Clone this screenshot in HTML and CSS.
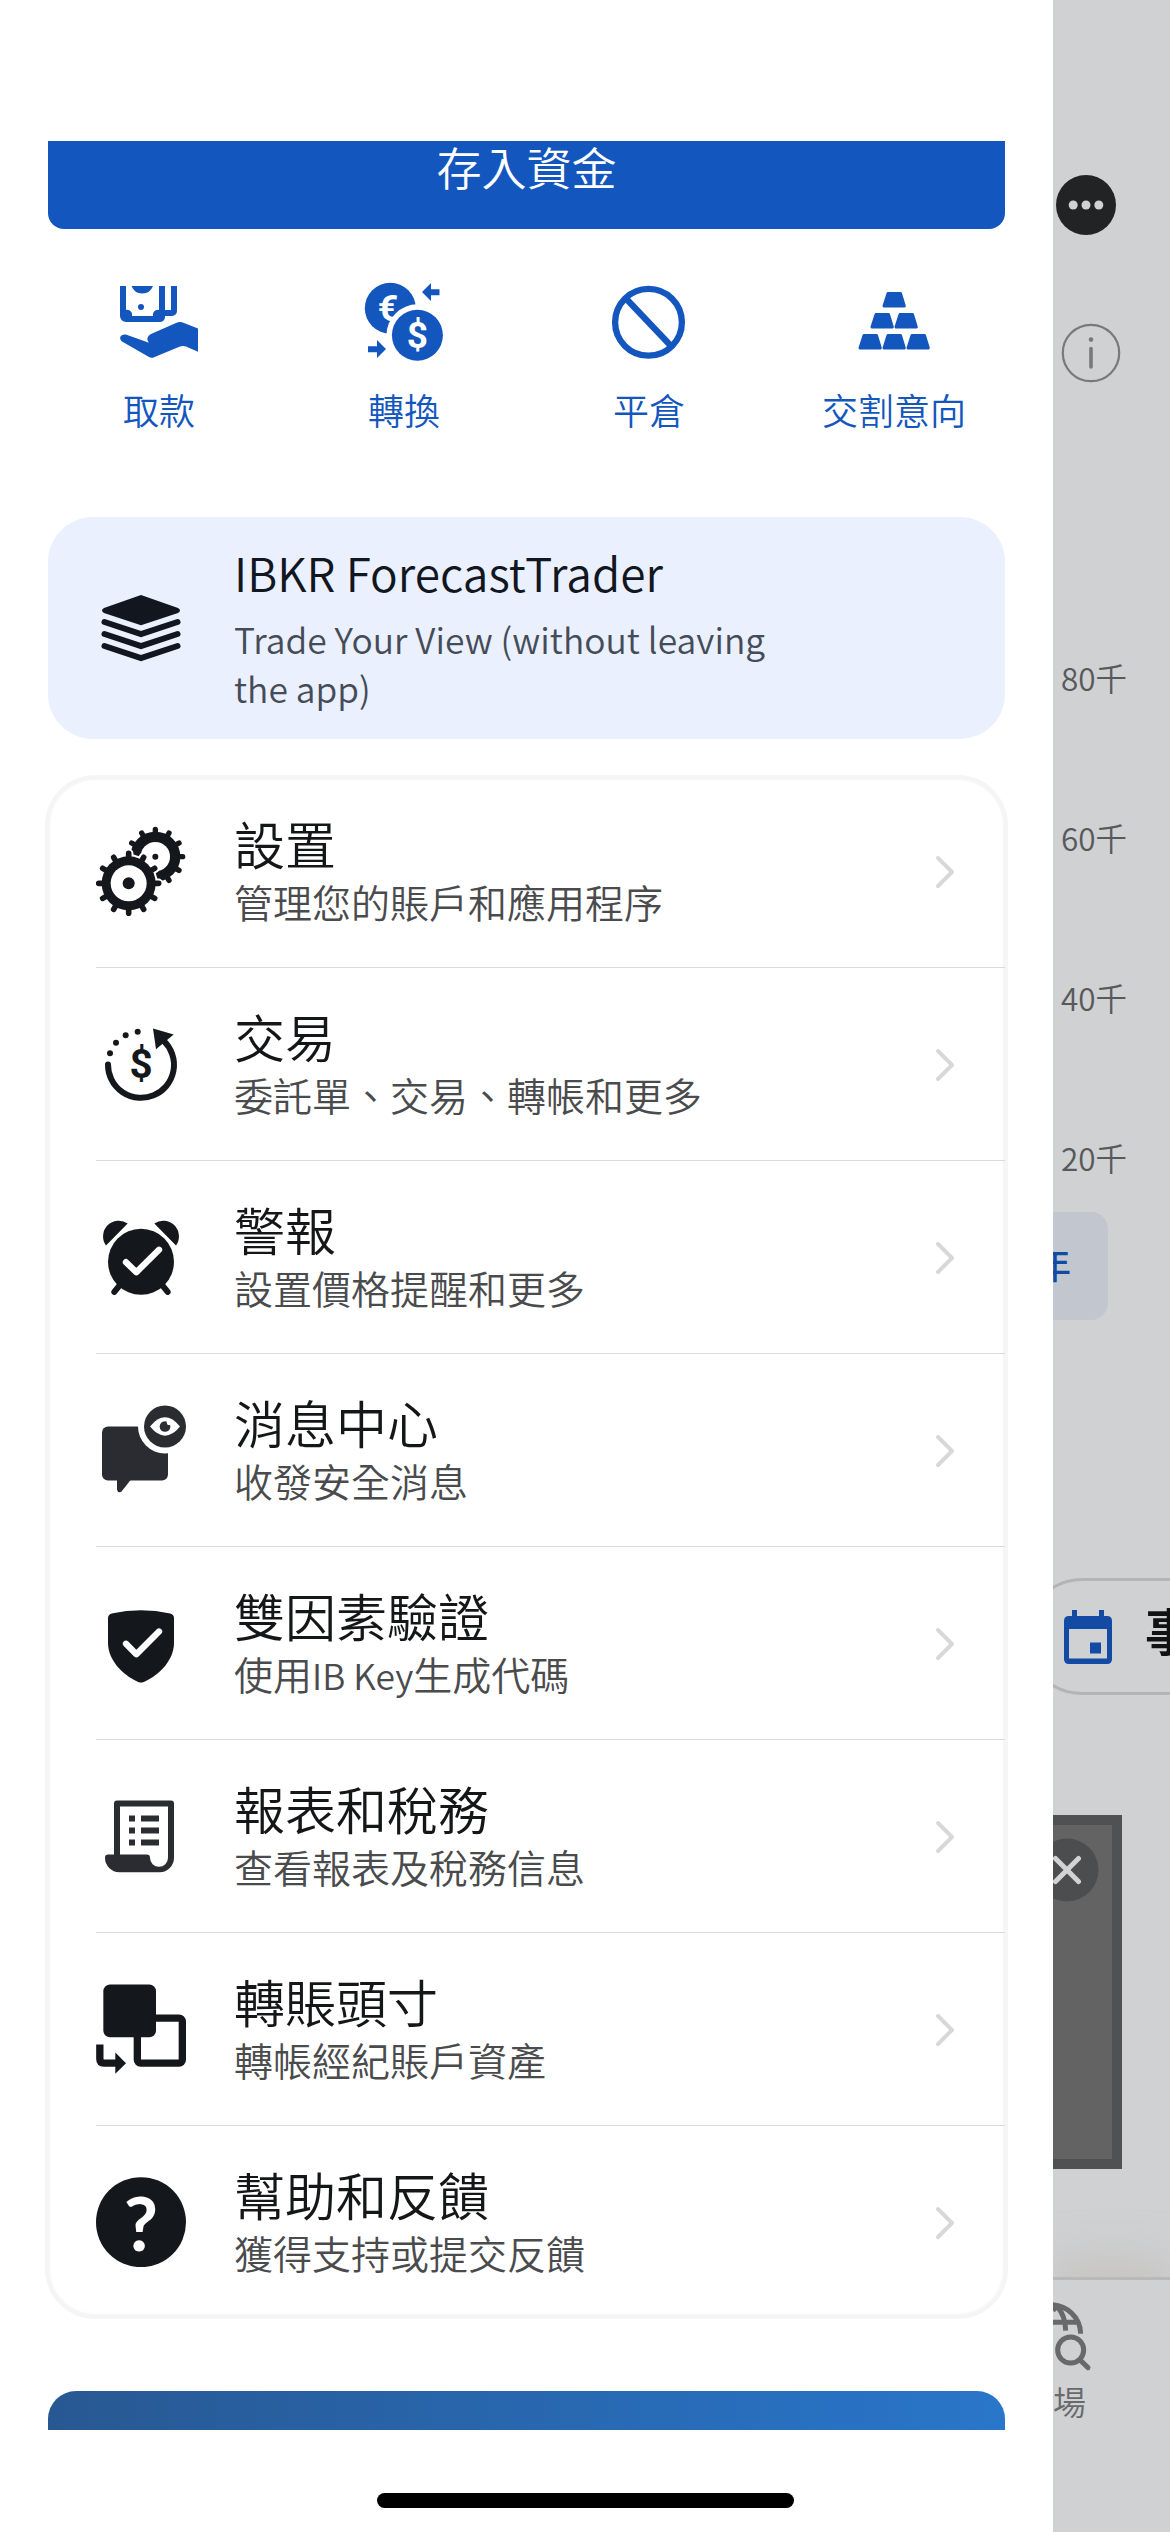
FILE: index.html
```html
<!DOCTYPE html>
<html lang="zh-Hant">
<head>
<meta charset="utf-8">
<title>選單</title>
<link rel="stylesheet" href="styles.css">
</head>
<body>
<div class="app">
  <aside class="drawer">
    <div class="scroller">
      <button class="deposit">存入資金</button>

      <nav class="actions">
        <a class="action">
          <svg class="icon" viewBox="114 277 90 90" fill="currentColor">
            <path d="M120 286h6v24a5 5 0 0 1 6 6h21a5 5 0 0 1 6-6v-24h6v24h6v-24h6v25a5 5 0 0 1-5 5h-7a5 5 0 0 1-5 6h-34a6 6 0 0 1-6-6z"/>
            <path d="M131.500 286a11.500 11.500 0 0 0 21.500 0z"/>
            <circle cx="141" cy="307" r="3"/>
            <path d="M126.500 334.800L149 342.800C146 339 147.500 336 151 334L176 323Q180 321 184 323L198 328.500V351.800L186 346.500Q183 345.500 180 346.500L154 357.200Q151.500 358.500 149 357L122 341.500C118 338 121 333.500 126.500 334.800z"/>
          </svg>
          <span>取款</span>
        </a>
        <a class="action">
          <svg class="icon" viewBox="359 277 90 90" fill="currentColor">
            <circle cx="390.300" cy="308.200" r="25.500"/>
            <text class="coin" x="388" y="321" font-size="36">€</text>
            <circle cx="417.400" cy="335.300" r="31" fill="#fff"/>
            <circle cx="417.400" cy="335.300" r="25.500"/>
            <text class="coin" x="417.400" y="348.300" font-size="37">$</text>
            <path d="M422 292l9-9v6.300h8.500v6H431v5.700zM386 349l-9-9v6.300h-9v6h9v5.700z"/>
          </svg>
          <span>轉換</span>
        </a>
        <a class="action">
          <svg class="icon" viewBox="604 277 90 90" fill="none" stroke="currentColor" stroke-width="6.300">
            <circle cx="648.500" cy="322.300" r="33.400"/>
            <path d="M625.500 298l46 48.500"/>
          </svg>
          <span>平倉</span>
        </a>
        <a class="action">
          <svg class="icon" viewBox="849 277 90 90" fill="currentColor" stroke="currentColor" stroke-width="3" stroke-linejoin="round">
            <path d="M888 293.500h12.500l3.800 12.500h-20.300zM876 314.500h12.500l3.800 12.500h-20.300zM900 314.500h12.500l3.800 12.500h-20.300zM864 335.500h12.500l3.800 12.500h-20.300zM888 335.500h12.500l3.800 12.500h-20.300zM912 335.500h12.500l3.800 12.500h-20.300z"/>
          </svg>
          <span>交割意向</span>
        </a>
      </nav>

      <section class="promo">
        <svg class="icon" viewBox="96 583 90 90" fill="none" stroke="currentColor" stroke-width="6" stroke-linecap="round">
          <path d="M141 595L178 608Q182 610.500 178 613L141 625.200L104 613Q100 610.500 104 608z" fill="currentColor" stroke="none"/>
          <path d="M104.500 622L141 634L177.500 622M104.500 634L141 646L177.500 634M104.500 646L141 658L177.500 646"/>
        </svg>
        <div class="promo-text">
          <h2 class="promo-title">IBKR ForecastTrader</h2>
          <p class="promo-sub">Trade Your View (without leaving the app)</p>
        </div>
      </section>

      <ul class="menu">
        <li class="item">
          <svg class="icon" viewBox="198 200 270 270">
            <g transform="translate(376 292)">
              <circle r="75" fill="currentColor"/>
              <path d="M-82 0H82M0-82V82M-71-41L71 41M-71 41L71-41M-41-71L41 71M41-71L-41 71" stroke="currentColor" stroke-width="16" stroke-linecap="round"/>
              <circle r="44" fill="#fff"/>
              <circle r="9" fill="currentColor"/>
            </g>
            <g transform="translate(296 372)">
              <circle r="87" fill="#fff"/>
              <path d="M-89 0H89M0-89V89M-77.500-44.800L77.500 44.800M-77.500 44.800L77.500-44.800M-44.800-77.500L44.800 77.500M44.800-77.500L-44.800 77.500" stroke="#fff" stroke-width="29" stroke-linecap="round"/>
              <circle r="81" fill="currentColor"/>
              <path d="M-90 0H90M0-90V90M-78-45L78 45M-78 45L78-45M-45-78L45 78M45-78L-45 78" stroke="currentColor" stroke-width="17" stroke-linecap="round"/>
              <circle r="54" fill="#fff"/>
              <circle r="18" fill="currentColor"/>
            </g>
          </svg>
          <div class="item-text"><h3>設置</h3><p>管理您的賬戶和應用程序</p></div>
          <svg class="chevron" viewBox="0 0 20 34"><path d="M3 3L17 17L3 31"/></svg>
        </li>
        <li class="item">
          <svg class="icon" viewBox="198 778.500 270 270" fill="currentColor">
            <path d="M234 915A99 99 0 1 0 402 845" fill="none" stroke="currentColor" stroke-width="18" stroke-linecap="round"/>
            <path d="M369 807L431 825L378 869z"/>
            <circle cx="240" cy="881" r="9"/><circle cx="258" cy="850" r="9"/><circle cx="287" cy="827" r="9"/><circle cx="323" cy="817" r="9"/>
            <text class="dollar" x="333" y="955" font-size="121">$</text>
          </svg>
          <div class="item-text"><h3>交易</h3><p>委託單、交易、轉帳和更多</p></div>
          <svg class="chevron" viewBox="0 0 20 34"><path d="M3 3L17 17L3 31"/></svg>
        </li>
        <li class="item">
          <svg class="icon" viewBox="198 157.500 270 270" fill="currentColor">
            <circle cx="333" cy="307" r="99"/>
            <path d="M228 258A47 47 0 0 1 293 192zM438 258A47 47 0 0 0 373 192z"/>
            <path d="M270 376L253 397M396 376L413 397" stroke="currentColor" stroke-width="18" stroke-linecap="round"/>
            <path d="M288 308L319 338L387 271" fill="none" stroke="#fff" stroke-width="19" stroke-linecap="round" stroke-linejoin="round"/>
          </svg>
          <div class="item-text"><h3>警報</h3><p>設置價格提醒和更多</p></div>
          <svg class="chevron" viewBox="0 0 20 34"><path d="M3 3L17 17L3 31"/></svg>
        </li>
        <li class="item">
          <svg class="icon soft" viewBox="198 736.500 270 270" fill="currentColor">
            <rect x="216" y="801" width="198" height="162" rx="18"/>
            <path d="M261 960V990Q263 1002 274 997L303 960z"/>
            <circle cx="405" cy="801" r="81" fill="#fff"/>
            <circle cx="405" cy="801" r="63"/>
            <path d="M360 801Q405 746 450 801Q405 856 360 801z" fill="#fff"/>
            <circle cx="405" cy="801" r="16"/><circle cx="417" cy="790" r="7" fill="#fff"/>
          </svg>
          <div class="item-text"><h3>消息中心</h3><p>收發安全消息</p></div>
          <svg class="chevron" viewBox="0 0 20 34"><path d="M3 3L17 17L3 31"/></svg>
        </li>
        <li class="item">
          <svg class="icon" viewBox="198 145.500 270 270" fill="currentColor">
            <path d="M234 206Q234 195 245 192Q333 173 421 192Q432 195 432 206V280C432 340 375 385 339 398Q333 400 327 398C291 385 234 340 234 280z"/>
            <path d="M288 283L319 314L387 246" fill="none" stroke="#fff" stroke-width="19" stroke-linecap="round" stroke-linejoin="round"/>
          </svg>
          <div class="item-text"><h3>雙因素驗證</h3><p>使用<span class="latin">IB Key</span>生成代碼</p></div>
          <svg class="chevron" viewBox="0 0 20 34"><path d="M3 3L17 17L3 31"/></svg>
        </li>
        <li class="item">
          <svg class="icon soft" viewBox="198 724.500 270 270" fill="currentColor">
            <path d="M261 918V762H423V926" fill="none" stroke="currentColor" stroke-width="18" stroke-linejoin="round"/>
            <path d="M225 925Q225 915 235 915H350Q360 915 360 925A27 27 0 0 0 414 925H432A43 43 0 0 1 389 968H268A43 43 0 0 1 225 925z"/>
            <path d="M297 798h18v18h-18zM333 798h54v18h-54zM297 834h18v18h-18zM333 834h54v18h-54zM297 870h18v18h-18zM333 870h54v18h-54z"/>
          </svg>
          <div class="item-text"><h3>報表和稅務</h3><p>查看報表及稅務信息</p></div>
          <svg class="chevron" viewBox="0 0 20 34"><path d="M3 3L17 17L3 31"/></svg>
        </li>
        <li class="item">
          <svg class="icon" viewBox="198 163.500 270 270" fill="currentColor">
            <rect x="220" y="165" width="158" height="158" rx="20"/>
            <rect x="322" y="266" width="135" height="135" rx="10" fill="none" stroke="currentColor" stroke-width="22"/>
            <path d="M209.500 345V388Q209.500 401 222 401H260" fill="none" stroke="currentColor" stroke-width="22"/>
            <path d="M256 369L288 401L256 433z"/>
          </svg>
          <div class="item-text"><h3>轉賬頭寸</h3><p>轉帳經紀賬戶資產</p></div>
          <svg class="chevron" viewBox="0 0 20 34"><path d="M3 3L17 17L3 31"/></svg>
        </li>
        <li class="item">
          <svg class="icon" viewBox="198 742.500 270 270" fill="currentColor">
            <circle cx="333" cy="878" r="135"/>
            <text class="question" x="333" y="964" font-size="224">?</text>
          </svg>
          <div class="item-text"><h3>幫助和反饋</h3><p>獲得支持或提交反饋</p></div>
          <svg class="chevron" viewBox="0 0 20 34"><path d="M3 3L17 17L3 31"/></svg>
        </li>
      </ul>

      <div class="banner"></div>
    </div>
  </aside>

  <main class="page">
    <svg class="more" viewBox="0 0 60 60">
      <circle cx="30" cy="30" r="30" fill="#212324"/>
      <g fill="#d0d1d3"><circle cx="17.200" cy="30" r="4.500"/><circle cx="30" cy="30" r="4.500"/><circle cx="42.800" cy="30" r="4.500"/></g>
    </svg>
    <svg class="info" viewBox="0 0 60 60">
      <circle cx="30" cy="30" r="28.200" fill="none" stroke="#77797b" stroke-width="2.200"/>
      <circle cx="30" cy="16.600" r="2.300" fill="#77797b"/>
      <path d="M30 25.500V44" stroke="#77797b" stroke-width="3.600" stroke-linecap="round"/>
    </svg>
    <div class="axis"><span>80千</span><span>60千</span><span>40千</span><span>20千</span></div>
    <div class="range">年</div>
    <div class="pill">
      <svg class="calendar" viewBox="0 0 48 54">
        <path d="M5 6H43Q48 6 48 11V49Q48 54 43 54H5Q0 54 0 49V11Q0 6 5 6zM5 19V48.500H43V19z" fill="#124aa4" fill-rule="evenodd"/>
        <path d="M8 0h5v8H8zM35 0h5v8h-5zM26 32.500h11v11H26z" fill="#124aa4"/>
      </svg>
      <span>事</span>
    </div>
    <div class="video">
      <svg class="close" viewBox="0 0 64 64">
        <circle cx="32" cy="32" r="31.500" fill="#4c4d4e"/>
        <path d="M20.500 20.500L43.500 43.500M43.500 20.500L20.500 43.500" stroke="#d3d3d3" stroke-width="5" stroke-linecap="round"/>
      </svg>
    </div>
    <div class="tabbar">
      <svg class="market" viewBox="579 420 120 216" fill="none" stroke="currentColor" stroke-width="15">
        <path d="M570 434A92 88 0 0 1 662 521M570 487H658M590 438Q616 465 617 512M579 452Q590 440 590 432"/>
        <circle cx="632" cy="570" r="39"/>
        <path d="M662 602L684 623" stroke-linecap="round"/>
      </svg>
      <span>場</span>
    </div>
  </main>
  <div class="home-indicator"></div>
</div>
</body>
</html>
```
FILE: styles.css
```css
* { box-sizing: border-box; margin: 0; padding: 0; }

body {
  width: 1170px;
  height: 2532px;
  overflow: hidden;
  background: #fff;
  font-family: "Noto Sans CJK TC", "Noto Sans CJK SC", sans-serif;
  font-weight: 350;
}

.app { position: relative; display: flex; height: 2532px; }

/* Side drawer */
.drawer { width: 1053px; padding-top: 141px; background: #fff; }
.scroller { display: flex; flex-direction: column; height: 2289px; overflow: hidden; }
.scroller > * { flex-shrink: 0; }

.deposit {
  height: 125px;
  margin: -37px 48px 0;
  border: 0;
  border-radius: 16px;
  background: #1356be;
  color: #fff;
  font: inherit;
  font-size: 45px;
  line-height: 125px;
}

.icon { display: block; flex: none; width: 90px; height: 90px; }

.actions {
  display: grid;
  grid-template-columns: repeat(4, 245px);
  justify-content: center;
  margin-top: 48px;
  color: #1356be;
}
.action {
  display: flex;
  flex-direction: column;
  align-items: center;
  gap: 20px;
  font-size: 36px;
  line-height: 44px;
}
.coin { fill: #fff; font-family: Roboto, sans-serif; font-weight: 700; text-anchor: middle; }

.promo {
  display: flex;
  gap: 48px;
  height: 222px;
  margin: 86px 48px 0;
  padding: 25px 48px 0;
  border-radius: 45px;
  background: #eaf0fe;
  color: #11161f;
}
.promo .icon { margin-top: 41px; }
.promo-text { width: 550px; }
.promo-title { font-size: 46px; font-weight: inherit; line-height: 60px; }
.promo-sub { margin-top: 12px; color: #454c57; font-size: 35.4px; line-height: 49px; }

.menu {
  margin: 36px 45px 0;
  border-radius: 50px;
  box-shadow: inset 0 0 2px 5px #f5f5f5;
  list-style: none;
}
.item {
  display: flex;
  align-items: center;
  height: 193px;
  margin: 0 3px 0 51px;
  border-bottom: 1px solid #dadbdc;
  color: #14171c;
}
.item:last-child { border-bottom-color: transparent; }
.item-text { flex: 1; margin: 0 0 4px 48px; }
.item h3 { color: #151618; font-size: 51px; font-weight: inherit; line-height: 60px; }
.item p { height: 48px; margin-top: 4px; color: #4a4b4d; font-size: 39px; line-height: 48px; }
.latin { font-size: 35.4px; line-height: 1; }
.soft { color: #2b2c31; }
.dollar { font-family: Roboto, sans-serif; font-weight: 700; text-anchor: middle; }
.question { fill: #fff; font-family: Lato, sans-serif; font-weight: 700; text-anchor: middle; }
.chevron {
  width: 20px;
  height: 34px;
  margin: 2px 50px 0 0;
  fill: none;
  stroke: #d8d8d8;
  stroke-width: 4;
  stroke-linecap: round;
  stroke-linejoin: round;
}

.banner {
  height: 60px;
  margin: 72px 48px 0;
  border-radius: 28px 28px 0 0;
  background: linear-gradient(90deg, #285892, #2870c0 80%, #2a76c8);
}

/* Dimmed page behind the drawer */
.page {
  display: flex;
  flex-direction: column;
  width: 117px;
  overflow: hidden;
  background: #d0d1d3;
  color: #58595b;
}
.page > * { flex-shrink: 0; }
.more { width: 60px; height: 60px; margin: 175px 0 0 3px; }
.info { width: 60px; height: 60px; margin: 88px 0 0 8px; }
.axis {
  display: flex;
  flex-direction: column;
  margin: 214px 0 0 8px;
  font-size: 31.5px;
  line-height: 160px;
}
.range {
  height: 108px;
  width: 155px;
  margin: -25px 0 0 -100px;
  padding-right: 37px;
  border-radius: 17px;
  background: #c2c6ce;
  color: #124aa4;
  font-size: 36px;
  font-weight: 500;
  line-height: 102px;
  text-align: right;
}
.pill {
  display: flex;
  align-items: center;
  gap: 33px;
  width: 400px;
  height: 117px;
  margin: 258px 0 0 -29px;
  padding-left: 37px;
  border: 3px solid #b2b4b6;
  border-radius: 59px;
  color: #101214;
  font-size: 50px;
  font-weight: 700;
  line-height: 100px;
}
.pill span { margin-top: -16px; }
.calendar { width: 48px; height: 54px; }
.video {
  display: flex;
  justify-content: flex-end;
  width: 269px;
  height: 354px;
  margin: 120px 0 0 -200px;
  padding: 13px 13px 0 0;
  border: 10px solid #505152;
  background: #636363;
}
.close { width: 64px; height: 64px; }
.tabbar {
  flex: 1;
  margin-top: 108px;
  border-top: 3px solid #b9b9ba;
  box-shadow: 0 -20px 40px rgba(190, 185, 180, .5);
  color: #68696b;
  font-size: 33px;
  line-height: 40px;
}
.market { display: block; width: 40px; height: 72px; margin-top: 20px; }
.tabbar span { display: block; margin: 9px 0 0 0; }

.home-indicator {
  position: absolute;
  left: 377px;
  top: 2493px;
  width: 417px;
  height: 15px;
  border-radius: 8px;
  background: #000;
}
```
